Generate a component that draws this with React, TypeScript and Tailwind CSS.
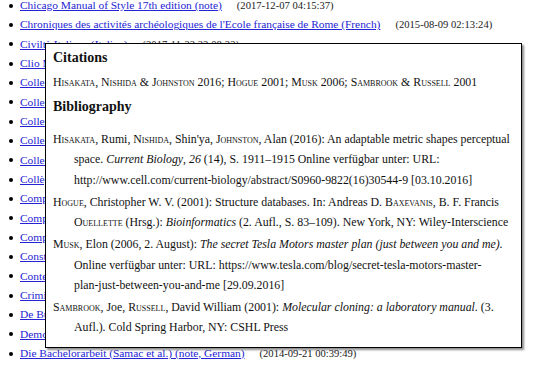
import React from "react";

interface Entry {
  title: string;
  stamp: string;
}

const ENTRIES: Entry[] = [
  { title: "Chicago Manual of Style 17th edition (note)", stamp: "(2017-12-07 04:15:37)" },
  { title: "Chroniques des activités archéologiques de l'Ecole française de Rome (French)", stamp: "(2015-08-09 02:13:24)" },
  { title: "Civiltà Italiana (Italian)", stamp: "(2017-11-22 22:08:22)" },
  { title: "Clio Medica", stamp: "(2016-03-14 11:02:51)" },
  { title: "Collection de l'Ecole française de Rome (French)", stamp: "(2015-08-09 02:13:24)" },
  { title: "Collection de l'Ecole française de Rome - Full Note (French)", stamp: "(2015-08-09 02:13:24)" },
  { title: "Collection du Centre Jean Bérard (French)", stamp: "(2016-05-02 09:41:10)" },
  { title: "Collection du Centre Jean Bérard - Full Note (French)", stamp: "(2016-05-02 09:41:10)" },
  { title: "Collections Electroniques de l'INHA (French)", stamp: "(2016-04-18 15:22:06)" },
  { title: "Collège de France (French)", stamp: "(2016-10-12 14:20:05)" },
  { title: "Comparative Population Studies", stamp: "(2017-02-01 08:12:44)" },
  { title: "Computer Supported Cooperative Work", stamp: "(2016-11-19 17:33:02)" },
  { title: "Computerlinguistik (German)", stamp: "(2016-07-28 12:00:18)" },
  { title: "Construction Management and Economics", stamp: "(2017-04-03 06:55:27)" },
  { title: "Contemporary Music Review", stamp: "(2016-09-15 10:47:39)" },
  { title: "Criminocorpus (French)", stamp: "(2017-01-24 19:05:11)" },
  { title: "De Buck (Dutch)", stamp: "(2015-12-30 21:18:46)" },
  { title: "Demographic Research", stamp: "(2016-06-08 03:29:57)" },
  { title: "Die Bachelorarbeit (Samac et al.) (note, German)", stamp: "(2014-09-21 00:39:49)" },
];

const SC: React.FC<{ children: React.ReactNode }> = ({ children }) => (
  <span className="[font-variant:small-caps]">{children}</span>
);

const BibEntry: React.FC<{ lines: React.ReactNode[] }> = ({ lines }) => (
  <div className="mb-[1.6px]">
    {lines.map((line, i) => (
      <div
        key={i}
        className={`whitespace-nowrap leading-[20.4px] ${i > 0 ? "pl-[21px]" : ""}`}
      >
        {line}
      </div>
    ))}
  </div>
);

export default function App() {
  return (
    <div className="relative w-[543px] h-[365px] overflow-hidden bg-white font-['Liberation_Serif',serif] text-[#111]">
      {/* Style list */}
      <ul className="-mt-[4px]">
        {ENTRIES.map((entry, i) => (
          <li key={i} className="flex items-center h-[19.33px] leading-[19.33px] whitespace-nowrap">
            <span className="ml-[9px] mr-[7px] w-[4px] h-[4px] rounded-full bg-black" />
            <a className="text-[11.4px] text-[#2424d4] underline underline-offset-[1px]">
              {entry.title}
            </a>
            <span className="ml-[15px] text-[10.6px] text-[#222]">{entry.stamp}</span>
          </li>
        ))}
      </ul>

      {/* Citation popup */}
      <div className="absolute left-[45px] top-[43px] w-[477px] h-[305px] bg-white border border-black shadow-[2px_2px_2px_rgba(0,0,0,0.45)] pl-[7px] pt-[4px] text-[11.85px]">
        <div className="font-bold text-[14px] leading-[20px]">Citations</div>
        <div className="mt-[4px] leading-[20px] whitespace-nowrap">
          <SC>Hisakata</SC>, <SC>Nishida</SC> &amp; <SC>Johnston</SC> 2016; <SC>Hogue</SC> 2001;{" "}
          <SC>Musk</SC> 2006; <SC>Sambrook</SC> &amp; <SC>Russell</SC> 2001
        </div>
        <div className="mt-[5px] font-bold text-[14px] leading-[20px]">Bibliography</div>
        <div className="mt-[12px]">
          <BibEntry
            lines={[
              <>
                <SC>Hisakata</SC>, Rumi, <SC>Nishida</SC>, Shin'ya, <SC>Johnston</SC>, Alan (2016): An adaptable metric shapes perceptual
              </>,
              <>
                space. <i>Current Biology</i>, <i>26</i> (14), S. 1911–1915 Online verfügbar unter: URL:
              </>,
              <>http://www.cell.com/current-biology/abstract/S0960-9822(16)30544-9 [03.10.2016]</>,
            ]}
          />
          <BibEntry
            lines={[
              <>
                <SC>Hogue</SC>, Christopher W. V. (2001): Structure databases. In: Andreas D. <SC>Baxevanis</SC>, B. F. Francis
              </>,
              <>
                <SC>Ouellette</SC> (Hrsg.): <i>Bioinformatics</i> (2. Aufl., S. 83–109). New York, NY: Wiley-Interscience
              </>,
            ]}
          />
          <BibEntry
            lines={[
              <>
                <SC>Musk</SC>, Elon (2006, 2. August): <i>The secret Tesla Motors master plan (just between you and me).</i>
              </>,
              <>Online verfügbar unter: URL: https://www.tesla.com/blog/secret-tesla-motors-master-</>,
              <>plan-just-between-you-and-me [29.09.2016]</>,
            ]}
          />
          <BibEntry
            lines={[
              <>
                <SC>Sambrook</SC>, Joe, <SC>Russell</SC>, David William (2001): <i>Molecular cloning: a laboratory manual.</i> (3.
              </>,
              <>Aufl.). Cold Spring Harbor, NY: CSHL Press</>,
            ]}
          />
        </div>
      </div>
    </div>
  );
}
